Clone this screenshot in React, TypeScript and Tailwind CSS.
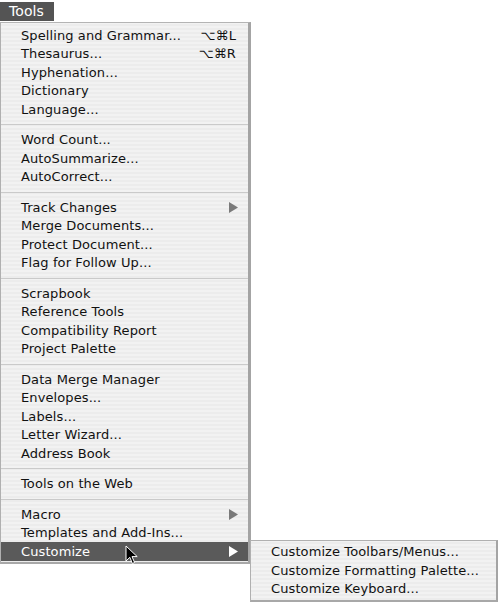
import React from 'react';

type Item = {
	label: string;
	shortcut?: string;
	submenu?: boolean;
	active?: boolean;
};

const groups: Item[][] = [
	[
		{ label: 'Spelling and Grammar...', shortcut: '⌥⌘L' },
		{ label: 'Thesaurus...', shortcut: '⌥⌘R' },
		{ label: 'Hyphenation...' },
		{ label: 'Dictionary' },
		{ label: 'Language...' },
	],
	[{ label: 'Word Count...' }, { label: 'AutoSummarize...' }, { label: 'AutoCorrect...' }],
	[
		{ label: 'Track Changes', submenu: true },
		{ label: 'Merge Documents...' },
		{ label: 'Protect Document...' },
		{ label: 'Flag for Follow Up...' },
	],
	[{ label: 'Scrapbook' }, { label: 'Reference Tools' }, { label: 'Compatibility Report' }, { label: 'Project Palette' }],
	[
		{ label: 'Data Merge Manager' },
		{ label: 'Envelopes...' },
		{ label: 'Labels...' },
		{ label: 'Letter Wizard...' },
		{ label: 'Address Book' },
	],
	[{ label: 'Tools on the Web' }],
	[{ label: 'Macro', submenu: true }, { label: 'Templates and Add-Ins...' }, { label: 'Customize', submenu: true, active: true }],
];

const subItems = ['Customize Toolbars/Menus...', 'Customize Formatting Palette...', 'Customize Keyboard...'];

const stripes =
	'bg-[repeating-linear-gradient(0deg,#ececec_0px,#ececec_2px,#f2f2f2_2px,#f2f2f2_4px)]';

const Arrow = ({ light }: { light?: boolean }) => (
	<svg width="9" height="11" viewBox="0 0 9 11" className="shrink-0">
		<path d="M0 0 L9 5.5 L0 11 Z" fill={light ? '#ffffff' : '#7a7a7a'} />
	</svg>
);

const Row = ({ item }: { item: Item }) => (
	<div
		className={`relative flex h-[18.5px] items-center pl-[20px] pr-[10px] ${
			item.active ? 'bg-[#5a5a5a] text-white' : 'text-[#111111]'
		}`}
	>
		<span className="flex-1 whitespace-nowrap">{item.label}</span>
		{item.shortcut && <span className="mr-[2px] whitespace-nowrap">{item.shortcut}</span>}
		{item.submenu && <Arrow light={item.active} />}
	</div>
);

const Cursor = () => (
	<svg width="14" height="20" viewBox="0 0 14 20" className="absolute left-[125px] top-[545px]">
		<path d="M1 1 L1 16 L4.8 12.3 L7.4 18.5 L9.6 17.5 L7 11.6 L12.2 11.6 Z" fill="#000" stroke="#fff" strokeWidth="1" />
	</svg>
);

const App = () => {
	return (
		<div className="relative h-[602px] w-[500px] overflow-hidden bg-white font-['DejaVu_Sans',sans-serif] text-[13px] tracking-[0.1px]">
			<div className="mt-[2px] flex h-[19px] w-[54px] items-center bg-[#545454] pl-[9px] text-[14px] text-white">
				Tools
			</div>
			<div
				className={`mt-[1px] w-[251px] border-t border-l border-t-[#b4b4b4] border-l-[#b0b0b0] border-r-[3px] border-r-[#a4a4a4] border-b-[2px] border-b-[#a8a8a8] pt-[3px] pb-[1.5px] ${stripes}`}
			>
				{groups.map((g, gi) => (
					<div key={gi}>
						{gi > 0 && (
							<div className="flex h-[12px] items-center">
								<div className="h-px w-full bg-[#cacaca]" />
							</div>
						)}
						{g.map(item => (
							<Row key={item.label} item={item} />
						))}
					</div>
				))}
			</div>
			<div
				className={`absolute left-[250px] top-[540px] w-[248px] border border-[#b0b0b0] border-r-[2px] border-r-[#a4a4a4] border-b-[2px] border-b-[#a8a8a8] pt-[1.5px] pb-[2px] ${stripes}`}
			>
				{subItems.map(s => (
					<div key={s} className="flex h-[18.5px] items-center whitespace-nowrap pl-[20px] text-[#111111]">
						{s}
					</div>
				))}
			</div>
			<Cursor />
		</div>
	);
};

export default App;
